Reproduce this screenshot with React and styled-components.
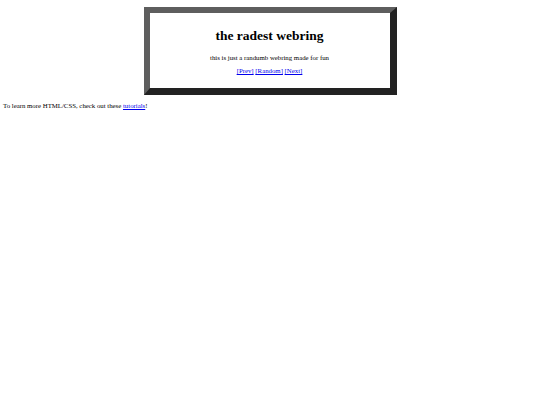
import React from 'react';
import styled, { createGlobalStyle } from 'styled-components';

const GlobalStyle = createGlobalStyle`
  html, body {
    margin: 0;
    background: #fff;
  }
  body {
    padding: 7px 3px;
    font-family: "Liberation Serif", "Times New Roman", serif;
    font-size: 6.8px;
    color: #000;
    -webkit-font-smoothing: antialiased;
  }
`;

const Ring = styled.div`
  box-sizing: border-box;
  width: 253px;
  height: 88px;
  margin: 0 auto;
  border-style: solid;
  border-width: 6px 7px 7px 6px;
  border-color: #5e5e5e #222 #222 #5e5e5e;
  background: #fff;
  text-align: center;
  padding-top: 15px;
`;

const Title = styled.h1`
  margin: 0 0 9px;
  font-size: 13.5px;
  line-height: 16px;
  font-weight: bold;
`;

const Blurb = styled.p`
  margin: 0 0 4px;
  font-size: 6.8px;
  line-height: 9px;
`;

const Nav = styled.p`
  margin: 0;
  font-size: 6.8px;
  line-height: 9px;
`;

const Link = styled.a`
  color: #00e;
  text-decoration: underline;
`;

const Footer = styled.p`
  margin: 6px 0 0;
  font-size: 6.8px;
  line-height: 9px;
`;

const App = () => {
  return (
    <>
      <GlobalStyle />
      <Ring>
        <Title>the radest webring</Title>
        <Blurb>this is just a randumb webring made for fun</Blurb>
        <Nav>
          <Link href="#">[Prev]</Link> <Link href="#">[Random]</Link>{' '}
          <Link href="#">[Next]</Link>
        </Nav>
      </Ring>
      <Footer>
        To learn more HTML/CSS, check out these <Link href="#">tutorials</Link>!
      </Footer>
    </>
  );
};

export default App;
